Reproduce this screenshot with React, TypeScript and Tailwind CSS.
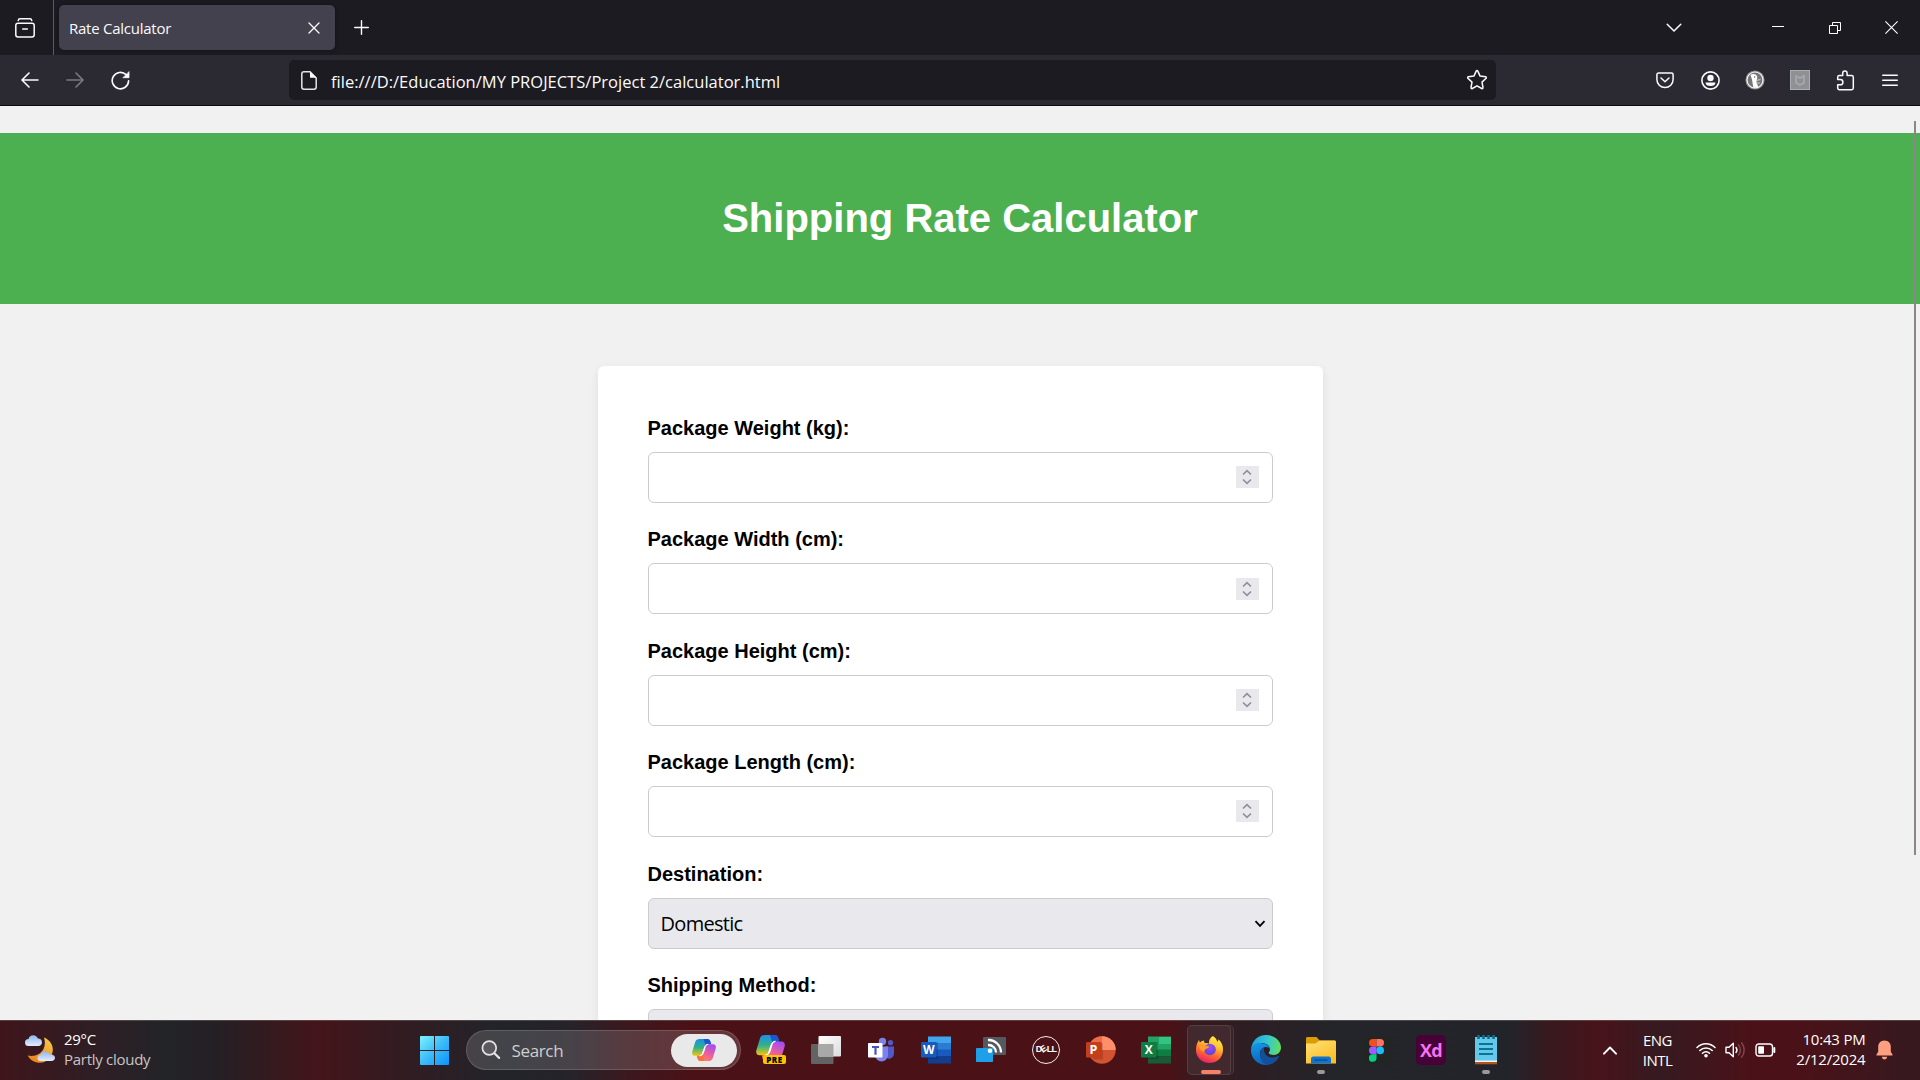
import type { ReactNode } from "react";

const UI = "font-['Open_Sans','Noto_Sans',sans-serif]";

/* ---------- Browser chrome ---------- */

function Cell({ children }: { children: ReactNode }) {
  return <div className="flex h-full w-[45px] items-center justify-center">{children}</div>;
}

function TabBar() {
  return (
    <div className="flex h-[55px] shrink-0 items-center bg-[#1c1b22] text-[#fbfbfe]">
      <div className="flex h-full w-[54px] items-center border-r border-[#5b5b63] pl-[15px]">
        <svg width="20" height="20" viewBox="0 0 20 20" fill="none" stroke="#fbfbfe" strokeWidth="1.5" strokeLinecap="round">
          <path d="M3.2 2.6C3.4 1.4 4 .8 5 .8h10c1 0 1.600.6 1.8 1.800" />
          <rect x=".8" y="5.200" width="18.400" height="13.800" rx="2.200" />
          <path d="M7.700 11h4.600" />
        </svg>
      </div>
      <div className="ml-[5px] flex h-[45px] w-[276px] items-center justify-between rounded-[5px] bg-[#42414d] pr-[15px] pl-[10px] shadow-[0_0_4px_rgba(0,0,0,0.45)]">
        <span className="text-[15px] leading-[20px] tracking-[-0.25px]">Rate Calculator</span>
        <svg width="12" height="12" viewBox="0 0 12 12" stroke="#fbfbfe" strokeWidth="1.3" strokeLinecap="round">
          <path d="M1 1l10 10M11 1L1 11" />
        </svg>
      </div>
      <svg className="ml-[19px]" width="15" height="15" viewBox="0 0 15 15" stroke="#fbfbfe" strokeWidth="1.4" strokeLinecap="round">
        <path d="M7.500.7v13.600M.7 7.500h13.600" />
      </svg>
      <div className="ml-auto flex items-center">
        <svg className="mr-[90px]" width="16" height="10" viewBox="0 0 16 10" fill="none" stroke="#fbfbfe" strokeWidth="1.5" strokeLinecap="round" strokeLinejoin="round">
          <path d="M1.200 1.200L8 8l6.800-6.800" />
        </svg>
        <svg className="mr-[45px]" width="12" height="12" viewBox="0 0 12 12">
          <path d="M0 4h12v1H0z" fill="#fff" />
        </svg>
        <svg className="mr-[44px]" width="12" height="12" viewBox="0 0 12 12" fill="none" stroke="#fff">
          <path d="M.5 3.500h8v8h-8zM3.500 3.500v-3h8v8h-3" />
        </svg>
        <svg className="mr-[22px]" width="13" height="13" viewBox="0 0 13 13" stroke="#fff" strokeWidth="1.100">
          <path d="M.4.4l12.200 12.200M12.600.4L.4 12.600" />
        </svg>
      </div>
    </div>
  );
}

function Toolbar() {
  return (
    <div className="flex h-[51px] shrink-0 items-center border-b border-[#0c0c0d] bg-[#2b2a33] text-[#fbfbfe]">
      <div className="flex h-full w-[289px] items-center pl-[7.500px]">
        <Cell>
          <svg width="18" height="16" viewBox="0 0 18 16" fill="none" stroke="#fbfbfe" strokeWidth="1.600" strokeLinecap="round" strokeLinejoin="round">
            <path d="M17 8H1M8 1L1 8l7 7" />
          </svg>
        </Cell>
        <Cell>
          <svg width="18" height="16" viewBox="0 0 18 16" fill="none" stroke="#7b7a81" strokeWidth="1.600" strokeLinecap="round" strokeLinejoin="round">
            <path d="M1 8h16M10 1l7 7-7 7" />
          </svg>
        </Cell>
        <Cell>
          <svg width="19" height="19" viewBox="0 0 19 19" fill="none" stroke="#fbfbfe" strokeWidth="1.600" strokeLinecap="round">
            <path d="M17.600 9.900a8.200 8.200 0 1 1-2.500-6.200" />
            <path d="M18 1v5.700h-5.700z" fill="#fbfbfe" strokeWidth=".8" strokeLinejoin="round" />
          </svg>
        </Cell>
      </div>
      <div className="flex h-[40px] w-[1207px] items-center rounded-[5px] bg-[#1c1b22] pr-[8px] pl-[12px]">
        <svg width="16" height="19" viewBox="0 0 16 19" fill="none" stroke="#e4e4e8" strokeWidth="1.500">
          <path d="M9 .8H3A2.200 2.200 0 0 0 .8 3v13A2.200 2.200 0 0 0 3 18.200h10a2.200 2.200 0 0 0 2.200-2.200V7z" />
          <path d="M9 .5v6.300h6.500z" fill="#fbfbfe" stroke="none" />
        </svg>
        <span className="mt-[3px] ml-[14px] text-[16.500px] leading-[22px] tracking-[0.010px] whitespace-pre">file:///D:/Education/MY PROJECTS/Project 2/calculator.html</span>
        <svg className="ml-auto" width="22" height="22" viewBox="0 0 22 22" fill="none" stroke="#fbfbfe" strokeWidth="1.500" strokeLinejoin="round">
          <path d="M10.200 2.100a.9.9 0 0 1 1.600 0l2.300 5 5.500.7a.9.9 0 0 1 .5 1.500L16 13.100l1 5.400a.9.9 0 0 1-1.300 1L11 16.800l-4.700 2.700a.9.9 0 0 1-1.300-1l1-5.400-4.100-3.800a.9.9 0 0 1 .5-1.500l5.500-.7z" />
        </svg>
      </div>
      <div className="ml-auto flex h-full items-center pr-[7.500px]">
        <Cell>
          <svg width="18" height="17" viewBox="0 0 18 17" fill="none" stroke="#fbfbfe" strokeWidth="1.500" strokeLinecap="round" strokeLinejoin="round">
            <path d="M2.500 1h13a1.600 1.600 0 0 1 1.600 1.600V7.500a8.100 8.100 0 0 1-16.200 0V2.600A1.600 1.600 0 0 1 2.500 1z" />
            <path d="M5 6l4 3.700L13 6" />
          </svg>
        </Cell>
        <Cell>
          <svg width="19" height="19" viewBox="0 0 19 19" fill="none">
            <circle cx="9.500" cy="9.500" r="8.600" stroke="#fbfbfe" strokeWidth="1.600" />
            <circle cx="9.500" cy="7" r="3.200" fill="#fbfbfe" />
            <path d="M4.500 11.400h10c0 2.200-2.100 3.600-5 3.600s-5-1.400-5-3.600z" fill="#fbfbfe" />
          </svg>
        </Cell>
        <Cell>
          <svg width="20" height="20" viewBox="0 0 20 20">
            <circle cx="10" cy="10" r="9.600" fill="#8c8c90" />
            <circle cx="10" cy="10" r="8" fill="#77777b" stroke="#f4f4f4" strokeWidth="1.200" />
            <path d="M5.500 5C7 3.200 11 3.600 12 6.200c.5 1.500 0 2.500-.2 3.800l-.3 2 1.800 5.200c-2 .8-4 .6-5 .2L7 9.500z" fill="#fff" />
            <path d="M11.500 10.500l4-1M11.500 13h3.500" stroke="#ccc" strokeWidth="1.200" />
            <circle cx="9.700" cy="7" r=".7" fill="#555" />
          </svg>
        </Cell>
        <Cell>
          <svg width="20" height="20" viewBox="0 0 20 20">
            <rect x=".5" y=".5" width="19" height="19" fill="#8f8f94" stroke="#a9b0b6" />
            <path d="M6 6l4 2 4-2v6.700L10 15l-4-2.300z" fill="none" stroke="#a3a8b0" strokeWidth="1.800" />
          </svg>
        </Cell>
        <Cell>
          <svg width="19" height="21" viewBox="0 0 19 21" fill="none" stroke="#fbfbfe" strokeWidth="1.500" strokeLinejoin="round">
            <path d="M1.700 9.600V7.300c0-1 .7-1.700 1.700-1.700h3.300V3.200a2.200 2.200 0 0 1 4.400 0v2.400h4.500c1 0 1.700.7 1.700 1.700v10.800c0 1-.7 1.700-1.700 1.700H3.400c-1 0-1.700-.7-1.700-1.700v-3.300h2.600a2.500 2.500 0 0 0 0-5.200z" />
          </svg>
        </Cell>
        <Cell>
          <svg width="16" height="13" viewBox="0 0 16 13" stroke="#fbfbfe" strokeWidth="1.400" strokeLinecap="round">
            <path d="M.7 1.200h14.600M.7 6.200h14.600M.7 11.200h14.600" />
          </svg>
        </Cell>
      </div>
    </div>
  );
}

/* ---------- Page ---------- */

function Spinner() {
  return (
    <span className="flex h-[22px] w-[23px] items-center justify-center bg-[#e9e9ed]">
      <svg width="10" height="16" viewBox="0 0 10 16" fill="none" stroke="#8f8f9d" strokeWidth="1.700">
        <path d="M1 5.500l4-3.900 4 3.900M1 10.500l4 3.900 4-3.900" />
      </svg>
    </span>
  );
}

function Field({ label, value }: { label: string; value?: string }) {
  return (
    <div className="mb-[24.400px] flex flex-col">
      <label className="mb-[12px] pt-[1px] text-[20px] leading-[23px] font-bold text-black">{label}</label>
      {value === undefined ? (
        <div className="flex h-[51px] items-start justify-end rounded-[6px] border border-[#ccc] bg-white pt-[13.300px] pr-[13px]">
          <Spinner />
        </div>
      ) : (
        <div className="flex h-[51px] items-center justify-between rounded-[6px] border border-[#ccc] bg-[#e9e9ed] pr-[5.500px] pl-[12px]">
          <span className={`${UI} mt-[2px] text-[20px] leading-[26px] tracking-[-0.700px] text-black`}>{value}</span>
          <svg className="mt-[1px]" width="12" height="8" viewBox="0 0 12 8" fill="none" stroke="#000" strokeWidth="1.800">
            <path d="M1.500 1.200L6 5.900l4.500-4.700" />
          </svg>
        </div>
      )}
    </div>
  );
}

function Page() {
  return (
    <div className="relative flex min-h-0 flex-1 flex-col items-center overflow-hidden bg-[#f1f1f1] pt-[27px] font-['Liberation_Sans',Arial,sans-serif]">
      <header className="flex h-[171px] w-full shrink-0 items-center justify-center bg-[#4caf50] pb-[2px]">
        <h1 className="text-[40px] leading-[46px] font-bold text-white">Shipping Rate Calculator</h1>
      </header>
      <main className="mt-[62px] h-[900px] w-[725px] shrink-0 rounded-[6px] bg-white px-[50px] pt-[50px] shadow-[0_3px_10px_rgba(0,0,0,0.08)]">
        <Field label="Package Weight (kg):" />
        <Field label="Package Width (cm):" />
        <Field label="Package Height (cm):" />
        <Field label="Package Length (cm):" />
        <Field label="Destination:" value="Domestic" />
        <Field label="Shipping Method:" value="" />
      </main>
      <div className="absolute top-[15px] right-[4px] h-[734px] w-[2px] bg-[#8a868a]" />
    </div>
  );
}

/* ---------- Taskbar ---------- */

function CopilotMark({ id, size }: { id: string; size: number }) {
  return (
    <svg width={size} height={size * 0.92} viewBox="0 0 24 22">
      <defs>
        <linearGradient id={id + "a"} x1="0" y1="0" x2="0" y2="1">
          <stop offset="0" stopColor="#1b8fe8" />
          <stop offset=".5" stopColor="#2fb08a" />
          <stop offset="1" stopColor="#f2c70f" />
        </linearGradient>
        <linearGradient id={id + "b"} x1=".7" y1="0" x2=".2" y2="1">
          <stop offset="0" stopColor="#a54df0" />
          <stop offset=".55" stopColor="#f0609a" />
          <stop offset="1" stopColor="#ff8a4a" />
        </linearGradient>
      </defs>
      <path d="M7.500 0h8c1.600 0 2.400 1 2.900 2.600l.8 2.700h-2.900c-1.500 0-2.300.7-2.800 2.200L11.700 13c-.8 2.600-1.800 3.700-4 3.700H3C.5 16.700-.3 14.700.3 12.500L3.200 3C3.900.9 5.200 0 7.500 0z" fill={`url(#${id}a)`} />
      <path d="M11.500 0h4c1.600 0 2.400 1 2.900 2.600l.8 2.700h-2.900c-1.200 0-2 .5-2.500 1.400z" fill="#1a55d4" />
      <path d="M16.500 22h-8c-1.600 0-2.400-1-2.900-2.600l-.8-2.700h2.900c1.500 0 2.300-.7 2.800-2.200L12.300 9c.8-2.600 1.800-3.700 4-3.700H21c2.500 0 3.300 2 2.700 4.200L20.800 19c-.7 2.100-2 3-4.300 3z" fill={`url(#${id}b)`} />
      <path d="M12.500 22h-4c-1.600 0-2.400-1-2.900-2.600l-.8-2.700h2.900c1.200 0 2-.5 2.500-1.400z" fill="#f9703e" />
      <path d="M13.300 7.500c.5-1.500 1.300-2.200 2.800-2.200-2 .2-3 1.400-3.800 3.700l-1.800 5.500c-.5 1.500-1.300 2.200-2.800 2.200 2-.2 3-1.100 4-3.700z" fill="#fff" stroke="#fff" strokeWidth="1" />
    </svg>
  );
}

function OfficeIcon({ letter, box, stripes }: { letter: string; box: string; stripes: [string, string, string, string] }) {
  return (
    <svg width="30" height="30" viewBox="0 0 30 30">
      <path d="M7 1.500h23v7H7z" fill={stripes[0]} />
      <path d="M7 8h23v7H7z" fill={stripes[1]} />
      <path d="M7 14.500h23v7H7z" fill={stripes[2]} />
      <path d="M7 21.500h23v7H7z" fill={stripes[3]} />
      <rect x="7" y="7" width="10" height="17" fill="#000" opacity=".18" />
      <rect x="0" y="7" width="15.500" height="15.500" rx="1.200" fill={box} />
      <text x="7.700" y="19" textAnchor="middle" fontFamily="Open Sans" fontWeight="700" fontSize="12" fill="#fff">{letter}</text>
    </svg>
  );
}

function Slot({ children, mark }: { children: ReactNode; mark?: boolean }) {
  return (
    <div className="relative flex h-full w-[55px] items-center justify-center">
      {children}
      {mark && <span className="absolute bottom-[6px] left-[23px] h-[4px] w-[8px] rounded-full bg-[#9a989b]" />}
    </div>
  );
}

function TaskIcons() {
  return (
    <div className="flex h-full items-center">
      <Slot>
        <div className="relative size-[30px]">
          <CopilotMark id="pre" size={29} />
          <span className={`${UI} absolute top-[20px] left-[7px] flex h-[9px] w-[23px] items-center justify-center rounded-[2px] bg-[#ffc400] text-[8px] leading-[9px] font-extrabold tracking-[0.500px] text-black`}>PRE</span>
        </div>
      </Slot>
      <Slot>
        <svg width="30" height="30" viewBox="0 0 30 30">
          <defs>
            <linearGradient id="tv" x1="0" y1="0" x2="1" y2="1"><stop stopColor="#fff" /><stop offset="1" stopColor="#dcdcdc" /></linearGradient>
          </defs>
          <rect x="0" y="9" width="22.500" height="20" rx="1" fill="#636363" />
          <rect x="7.500" y="1" width="22.500" height="20.500" rx="1" fill="url(#tv)" />
          <rect x="7.500" y="9" width="15" height="12.500" fill="#a8a8a8" />
        </svg>
      </Slot>
      <Slot>
        <svg width="30" height="30" viewBox="0 0 30 30">
          <circle cx="16.500" cy="6.500" r="3.700" fill="#7b83eb" />
          <circle cx="24.500" cy="7.700" r="2.600" fill="#5059c9" />
          <path d="M19 11.500h9v7a5 5 0 0 1-7.500 4.500z" fill="#5059c9" />
          <path d="M9 11.500h13v8.500a6.300 6.300 0 0 1-13 0z" fill="#7b83eb" />
          <rect x="2" y="8" width="14.500" height="14.500" rx=".8" fill="#fff" />
          <path d="M6 11h7v2H10.600v6.700H8.400V13H6z" fill="#4b53bc" />
        </svg>
      </Slot>
      <Slot>
        <OfficeIcon letter="W" box="#185abd" stripes={["#41a5ee", "#2b7cd3", "#185abd", "#103f91"]} />
      </Slot>
      <Slot>
        <svg width="30" height="30" viewBox="0 0 30 30">
          <rect x="7" y="2" width="23" height="18" rx="1" fill="#55595e" />
          <rect x="0" y="13" width="17" height="14" rx=".8" fill="#1f9fe8" />
          <path d="M12 5A12.500 12.500 0 0 1 25 17.500M12 10a7.500 7.500 0 0 1 8 7.500" fill="none" stroke="#fff" strokeWidth="2.300" />
          <circle cx="14" cy="15.700" r="2.300" fill="#fff" />
        </svg>
      </Slot>
      <Slot>
        <div className="flex size-[28px] items-center justify-center rounded-full border-[1.500px] border-[#f2eced]">
          <span className="font-['Liberation_Sans',Arial,sans-serif] text-[9px] font-bold tracking-[-0.700px] text-white">
            D<span className="inline-block -rotate-[35deg]">E</span>LL
          </span>
        </div>
      </Slot>
      <Slot>
        <svg width="30" height="30" viewBox="0 0 30 30">
          <circle cx="16" cy="15" r="13.700" fill="#d35230" />
          <path d="M16 1.300A13.700 13.700 0 0 1 29.700 15H16z" fill="#ff8f6b" />
          <path d="M16 1.300A13.700 13.700 0 0 0 2.300 15H16z" fill="#ed6c47" />
          <rect x="7" y="8" width="10" height="16.500" fill="#000" opacity=".15" />
          <rect x="0" y="7" width="15.500" height="15.500" rx="1.200" fill="#c43e1c" />
          <text x="7.500" y="19" textAnchor="middle" fontFamily="Open Sans" fontWeight="700" fontSize="12.500" fill="#fff">P</text>
        </svg>
      </Slot>
      <Slot>
        <div className="relative">
          <OfficeIcon letter="X" box="#107c41" stripes={["#21a366", "#21a366", "#107c41", "#185c37"]} />
          <span className="absolute top-[1.500px] right-0 h-[7px] w-[12px] bg-[#33c481]" />
        </div>
      </Slot>
      <div className="relative flex h-full w-[55px] items-center justify-center">
        <span className="absolute top-[5px] left-[12px] h-[50px] w-[38px] rounded-[5px] border border-white/8 bg-white/4" />
        <span className="absolute top-[5px] left-[3px] h-[50px] w-[44px] rounded-[5px] border border-white/10 bg-[#42292d]" />
        <svg className="relative mr-[4px] mb-[2px]" width="29" height="29" viewBox="0 0 30 30">
          <defs>
            <linearGradient id="ff" x1=".75" y1="0" x2=".35" y2="1">
              <stop stopColor="#fff04a" /><stop offset=".35" stopColor="#ffc22e" /><stop offset=".65" stopColor="#ff6a30" /><stop offset="1" stopColor="#ea1d68" />
            </linearGradient>
            <radialGradient id="ffp" cx=".5" cy=".3" r=".7"><stop stopColor="#a04cf2" /><stop offset="1" stopColor="#5b45d2" /></radialGradient>
          </defs>
          <path d="M18.500 1c2.500 1.700 4 3.500 4.500 6 1-.6 1.300-1.500 1.200-2.500C27.600 7.500 29 11 29 15c0 8-6 14-14 14S1 23 1 15.500C1 11 2.300 8 4.300 5c0 1 .2 1.900.8 2.700C6.500 6.300 8 5.900 9.500 5.600c-.2 1-.1 2 .7 2.700 1.700-.3 3.300 0 4.300.7-.4-3 .8-6.200 4-8z" fill="url(#ff)" />
          <circle cx="15.500" cy="15" r="6" fill="url(#ffp)" />
          <path d="M4 11c2.600-1.200 5-.8 7 .7 1.500-.6 3-.4 4 .2-.7 1.300-2 1.900-3.500 2.300-1.200.5-1.700 1.300-1.500 2.700C7 17.500 4.500 15 4 11z" fill="#ff9a2c" />
        </svg>
        <span className="absolute bottom-[6px] left-[17.500px] h-[4px] w-[20px] rounded-full bg-[#f4826a]" />
      </div>
      <Slot>
        <svg width="30" height="30" viewBox="0 0 30 30">
          <defs>
            <linearGradient id="e1" x1="0" y1=".4" x2="1" y2=".5"><stop stopColor="#1fa0e0" /><stop offset=".55" stopColor="#35c8d0" /><stop offset="1" stopColor="#62df5a" /></linearGradient>
            <linearGradient id="e2" x1=".3" y1="0" x2=".5" y2="1"><stop stopColor="#1696e6" /><stop offset="1" stopColor="#0b63bd" /></linearGradient>
          </defs>
          <path d="M0 14.500C.5 6 7 0 15 0c8.500 0 15 6 15 12.500 0 4.500-3.300 7.500-7.300 7.500-3 0-5-1-5-2.200 0-.8 1.300-1.300 1.300-3.600C19 10.500 15 8 10.500 8 5.500 8 1.500 10.500 0 14.500z" fill="url(#e1)" />
          <path d="M0 14.500C1.200 10.300 4.700 8 9 8c5.500 0 9.500 2.800 10 6-1-1.500-2.700-2.300-4.500-2C11 12.500 8.500 16 9 20c.5 5 4.500 9 8.500 9.800C8 31.500-.5 24 0 14.500z" fill="url(#e2)" />
          <path d="M9 19.500c.2-3.500 1.700-6 4.200-7.200-.9 4.200 1.300 10.200 8.300 10.200 2.700 0 4.700-.9 5.900-1.500.5-.2.900.2.600.7C25.500 26.500 21 30 16 29.900c-4-1.500-7-5.400-7-10.400z" fill="#12509c" />
        </svg>
      </Slot>
      <Slot mark>
        <svg width="30" height="30" viewBox="0 0 30 30">
          <defs>
            <linearGradient id="fo" x1="0" y1="0" x2=".6" y2="1"><stop stopColor="#ffe07a" /><stop offset="1" stopColor="#fbbf24" /></linearGradient>
          </defs>
          <path d="M0 3.500C0 2.500.6 2 1.500 2h9l3 3.300H29V12H0z" fill="#dd9b04" />
          <path d="M0 8.500h9.500L13 5.800h16c.6 0 1 .4 1 1v21.700H0z" fill="url(#fo)" />
          <path d="M5 28.500v-4.700c0-1.300.9-2.300 2.300-2.300h15.400c1.400 0 2.300 1 2.300 2.300v4.700z" fill="#1073cf" />
          <path d="M9 25h12" stroke="#0a4f9c" strokeWidth="1.300" strokeLinecap="round" />
        </svg>
      </Slot>
      <Slot>
        <div className="flex size-[29px] items-center justify-center rounded-[3px] bg-[#212624]">
          <svg width="15" height="23" viewBox="0 0 15 23">
            <path d="M7.500 0H3.800a3.800 3.800 0 0 0 0 7.600h3.700z" fill="#f24e1e" />
            <path d="M7.500 0h3.700a3.800 3.800 0 0 1 0 7.600H7.500z" fill="#ff7262" />
            <path d="M7.500 7.600H3.800a3.800 3.800 0 0 0 0 7.600h3.700z" fill="#a259ff" />
            <circle cx="11.200" cy="11.400" r="3.800" fill="#1abcfe" />
            <path d="M7.500 15.200H3.800A3.800 3.800 0 1 0 7.500 19z" fill="#0acf83" />
          </svg>
        </div>
      </Slot>
      <Slot>
        <div className={`${UI} flex size-[30px] items-center justify-center rounded-[5px] bg-[#470137] text-[18px] leading-[20px] font-bold tracking-[-0.800px] text-[#f772f2]`}>Xd</div>
      </Slot>
      <Slot mark>
        <svg width="22" height="30" viewBox="0 0 22 30">
          <path d="M0 26h22v3.300H0z" fill="#b0561c" />
          <path d="M0 24h22v3H0z" fill="#f2f2f2" />
          <path d="M0 2h22v23.500H0z" fill="#62c9ea" />
          <path d="M4 9h14M4 14h14M4 19h14" stroke="#0c7396" strokeWidth="1.900" />
          <path d="M3.500 0v4M8.500 0v4M13.500 0v4M18.500 0v4" stroke="#0f6d90" strokeWidth="2.600" />
        </svg>
      </Slot>
    </div>
  );
}

function Weather() {
  return (
    <div className="flex h-full w-[407px] items-center pl-[25px]">
      <svg className="-mt-[3px]" width="30" height="30" viewBox="0 0 30 30">
        <defs>
          <linearGradient id="mo" x1=".8" y1="0" x2=".2" y2="1"><stop stopColor="#f5c945" /><stop offset="1" stopColor="#ee7f1b" /></linearGradient>
          <linearGradient id="cl" x1="0" y1="0" x2="0" y2="1"><stop stopColor="#8fb6f0" /><stop offset="1" stopColor="#e3edfb" /></linearGradient>
        </defs>
        <path d="M19 3.500c5 2 9 6.500 8.800 12.500C27.500 23 22 28.800 15 28.800c-5 0-9.700-2.500-12.300-7.300C10 23 16 20 18.500 15c1.700-3.700 1.800-7.500.5-11.500z" fill="url(#mo)" />
        <path d="M3.500 12a3.500 3.500 0 0 1 0-7C4 2.500 6 1.300 8.200 1.300c2.300 0 4 1.300 4.700 3.300 2.500 0 4.100 1.700 4.100 3.700S15.500 12 13.500 12z" fill="url(#cl)" />
        <path d="M15.500 27a3 3 0 0 1 0-6c.5-2.300 2.200-3.700 4.400-3.700 2 0 3.600 1.200 4.300 3 3.300-.2 5.800 1.200 5.800 3.500 0 2-1.500 3.200-3.500 3.200z" fill="url(#cl)" />
      </svg>
      <div className="-mt-[2px] ml-[9px] flex flex-col text-[15px] leading-[20px] tracking-[-0.280px]">
        <span className="text-white">29°C</span>
        <span className="text-[#c9c5c6]">Partly cloudy</span>
      </div>
    </div>
  );
}

function Tray() {
  return (
    <div className="ml-auto flex h-full items-center pr-[27px] text-[15px] leading-[20px] tracking-[-0.200px] text-white">
      <svg width="14" height="9" viewBox="0 0 14 9" fill="none" stroke="#fff" strokeWidth="1.900" strokeLinecap="round" strokeLinejoin="round">
        <path d="M1 7.700L7 1.500l6 6.200" />
      </svg>
      <div className="ml-[24px] flex w-[34px] flex-col items-center tracking-[-0.500px]">
        <span>ENG</span>
        <span>INTL</span>
      </div>
      <svg className="ml-[21px]" width="20" height="16" viewBox="0 0 20 16" fill="none" stroke="#fff" strokeWidth="1.500" strokeLinecap="round">
        <path d="M1 5.500a12.700 12.700 0 0 1 18 0M3.800 8.500a8.800 8.800 0 0 1 12.400 0M6.500 11.300a5 5 0 0 1 7 0" />
        <circle cx="10" cy="13.700" r="1.800" fill="#fff" stroke="none" />
      </svg>
      <svg className="ml-[9.500px]" width="21" height="18" viewBox="0 0 21 18" fill="none" stroke="#fff" strokeWidth="1.400" strokeLinejoin="round" strokeLinecap="round">
        <path d="M1 6.200h3L8.300 2.300v13.400L4 11.800H1z" />
        <path d="M11 6.500a4 4 0 0 1 0 5" />
        <path d="M13.500 4a7.500 7.500 0 0 1 0 10M16.500 1.800a11 11 0 0 1 0 14.400" stroke="#84474c" />
      </svg>
      <svg className="ml-[9px]" width="21" height="14" viewBox="0 0 21 14" fill="none" stroke="#fff" strokeWidth="1.400">
        <rect x="1" y="1" width="16.500" height="12" rx="2.800" />
        <rect x="3.200" y="3.200" width="5.800" height="7.600" rx=".8" fill="#fff" stroke="none" />
        <path d="M19.300 5v4" strokeWidth="2" strokeLinecap="round" />
      </svg>
      <div className="-mt-[2px] flex w-[89.500px] flex-col items-end">
        <span>10:43 PM</span>
        <span>2/12/2024</span>
      </div>
      <svg className="ml-[10.500px]" width="17" height="20" viewBox="0 0 17 20" fill="#ff9f80">
        <path d="M8.500.5c3.800 0 6.300 2.800 6.300 6.300v5l1.700 2.700c.3.500 0 1-.6 1H1.100c-.6 0-.9-.5-.6-1l1.700-2.700v-5C2.200 3.300 4.700.5 8.500.5z" />
        <path d="M5.800 16.800h5.400c-.2 1.600-1.200 2.700-2.700 2.700s-2.500-1.100-2.700-2.700z" />
      </svg>
    </div>
  );
}

function Taskbar() {
  return (
    <div className="flex h-[60px] shrink-0 items-center bg-[linear-gradient(90deg,#3f151b_0px,#2d1f25_100px,#222428_170px,#251f24_220px,#44151a_320px,#351a20_380px,#22242a_500px,#26232a_570px,#3c181e_630px,#4a1217_690px,#4a1217_1170px,#351b20_1200px,#2b1f24_1260px,#23252a_1340px,#22242a_1510px,#38191e_1550px,#48131a_1600px,#361a21_1660px,#4a1218_1750px,#4a1218_1800px,#38181f_1900px)] shadow-[inset_0_1px_0_rgba(130,115,110,0.450)]">
      <Weather />
      <div className="flex h-full w-[55px] items-center justify-center">
        <svg width="29" height="29" viewBox="0 0 29 29">
          <defs>
            <linearGradient id="wl" x1="0" y1="0" x2="29" y2="29" gradientUnits="userSpaceOnUse"><stop stopColor="#7df3ff" /><stop offset=".5" stopColor="#3cbcf8" /><stop offset="1" stopColor="#0a93ff" /></linearGradient>
          </defs>
          <path d="M1 0h13v14H0V1a1 1 0 0 1 1-1zM15 0h13a1 1 0 0 1 1 1v13H15zM0 15h14v14H1a1 1 0 0 1-1-1zM15 15h14v13a1 1 0 0 1-1 1H15z" fill="url(#wl)" />
        </svg>
      </div>
      <div className="ml-[4px] flex h-[40px] w-[275px] items-center rounded-full border border-white/15 bg-white/15 pr-[3px] pl-[13.500px]">
        <svg width="20" height="20" viewBox="0 0 20 20" fill="none" stroke="#e4e2e3" strokeLinecap="round">
          <circle cx="8.300" cy="8" r="6.900" strokeWidth="1.700" fill="#6b696c" fillOpacity=".6" />
          <path d="M13.400 13.300l4.700 4.600" strokeWidth="2.200" />
        </svg>
        <span className="mt-[2px] ml-[11px] text-[17px] leading-[22px] tracking-[-0.350px] text-[#d0cdce]">Search</span>
        <div className="ml-auto flex h-[33px] w-[66px] items-center justify-center rounded-full bg-[#e9e9ea]">
          <CopilotMark id="srch" size={24} />
        </div>
      </div>
      <div className="ml-[2.500px] h-full">
        <TaskIcons />
      </div>
      <Tray />
    </div>
  );
}

export default function App() {
  return (
    <div className={`${UI} flex h-[1080px] w-[1920px] flex-col overflow-hidden`}>
      <TabBar />
      <Toolbar />
      <Page />
      <Taskbar />
    </div>
  );
}
